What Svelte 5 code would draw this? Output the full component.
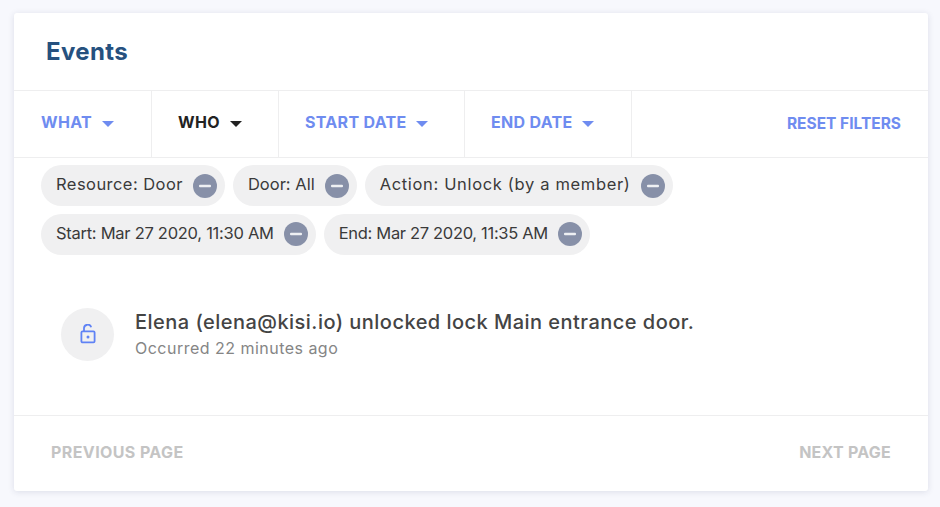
<script>
  const tabs = [
    { label: 'WHAT', active: false },
    { label: 'WHO', active: true },
    { label: 'START DATE', active: false },
    { label: 'END DATE', active: false }
  ];
  const rows = [
    [{ t: 'Resource: Door', s: 0.45 }, { t: 'Door: All', s: 0 }, { t: 'Action: Unlock (by a member)', s: 0.66 }],
    [{ t: 'Start: Mar 27 2020, 11:30 AM', s: -0.27 }, { t: 'End: Mar 27 2020, 11:35 AM', s: -0.32 }]
  ];
</script>

<div class="page">
  <section class="card">
    <header class="head"><h1>Events</h1></header>
    <nav class="tabs">
      {#each tabs as t}
        <div class="tab" class:active={t.active}>
          <span>{t.label}</span><i class="caret"></i>
        </div>
      {/each}
      <div class="reset"><span>RESET FILTERS</span></div>
    </nav>
    <div class="chips">
      {#each rows as row}
        <div class="chiprow">
          {#each row as c}
            <div class="chip">
              <span style="letter-spacing:{c.s}px">{c.t}</span>
              <svg class="minus" viewBox="0 0 24 24" width="24" height="24"><circle cx="12" cy="12" r="12" fill="#8790a8"/><rect x="6" y="10.8" width="12" height="2.4" rx="1" fill="#eef0f3"/></svg>
            </div>
          {/each}
        </div>
      {/each}
    </div>
    <div class="event">
      <div class="avatar">
        <svg viewBox="0 0 16 20" width="16" height="20" fill="none" stroke="#5f82f5" stroke-width="1.8">
          <rect x="1.4" y="7.4" width="13.2" height="11" rx="1.2"/>
          <path d="M4 7V4.6a3.7 3.7 0 0 1 7.2-1.4"/>
          <circle cx="8" cy="13" r="1.5" fill="#5f82f5" stroke="none"/>
        </svg>
      </div>
      <div class="info">
        <div class="title">Elena (elena@kisi.io) unlocked lock Main entrance door.</div>
        <div class="sub">Occurred 22 minutes ago</div>
      </div>
    </div>
    <footer class="foot"><span class="prev">PREVIOUS PAGE</span><span class="next">NEXT PAGE</span></footer>
  </section>
</div>

<style>
  :global(body) { margin: 0; background: #f7f8fd; }
  .page { padding: 13px 12px 16px 14px; font-family: Inter, "Liberation Sans", sans-serif; height: 507px; box-sizing: border-box; }
  .card { background: #fff; height: 478px; border-radius: 3px; box-shadow: 0 1px 6px rgba(40,50,90,.13); display: flex; flex-direction: column; }
  .head { height: 77px; display: flex; align-items: center; padding-left: 32px; border-bottom: 1px solid #eeeeef; }
  h1 { margin: 0 0 1px; font-size: 24px; font-weight: 700; color: #26517f; letter-spacing: 0.35px; }
  .tabs { display: grid; grid-template-columns: 138px 127px 186px 167px 1fr; height: 66px; border-bottom: 1px solid #eeeeef; align-items: stretch; }
  .tab { display: flex; align-items: center; padding: 0 0 5px 26px; border-right: 1px solid #eeeeef; font-size: 16px; font-weight: 700; color: #6f8cf0; letter-spacing: 0.3px; }
  .tab:first-child { padding-left: 27px; }
  .tab.active { color: #222; }
  .caret { width: 0; height: 0; border-left: 6.5px solid transparent; border-right: 6.5px solid transparent; border-top: 6.5px solid currentColor; margin-left: 10px; margin-top: 4px; }
  .reset { display: flex; align-items: center; justify-content: flex-end; padding: 0 27px 2px 0; font-size: 15.5px; font-weight: 700; color: #6f8cf0; }
  .chips { padding: 7px 27px 0; display: flex; flex-direction: column; gap: 7.5px; }
  .chiprow { display: flex; gap: 8px; }
  .chip { height: 41px; border-radius: 21px; background: #f0f0f1; display: flex; align-items: center; padding: 0 8px 0 15px; gap: 10px; font-size: 16.5px; color: #3a3a3a; }
  .chip span { padding-bottom: 3px; }
  .event { display: flex; align-items: center; gap: 21px; padding: 53px 0 0 47px; }
  .avatar { width: 53px; height: 53px; border-radius: 50%; background: #f0f0f1; display: flex; align-items: center; justify-content: center; }
  .info { padding-top: 1px; }
  .title { font-size: 20px; font-weight: 500; color: #444; line-height: 26px; letter-spacing: 0.47px; }
  .sub { font-size: 16px; color: #858585; line-height: 26px; letter-spacing: 0.48px; }
  .foot { margin-top: auto; height: 76px; border-top: 1px solid #eeeeef; display: flex; align-items: center; justify-content: space-between; padding: 0 37px 4px; box-sizing: border-box; font-size: 16px; font-weight: 700; color: #c4c4c4; }
  .prev { letter-spacing: 0.4px; }
  .next { letter-spacing: 0.25px; }
</style>
